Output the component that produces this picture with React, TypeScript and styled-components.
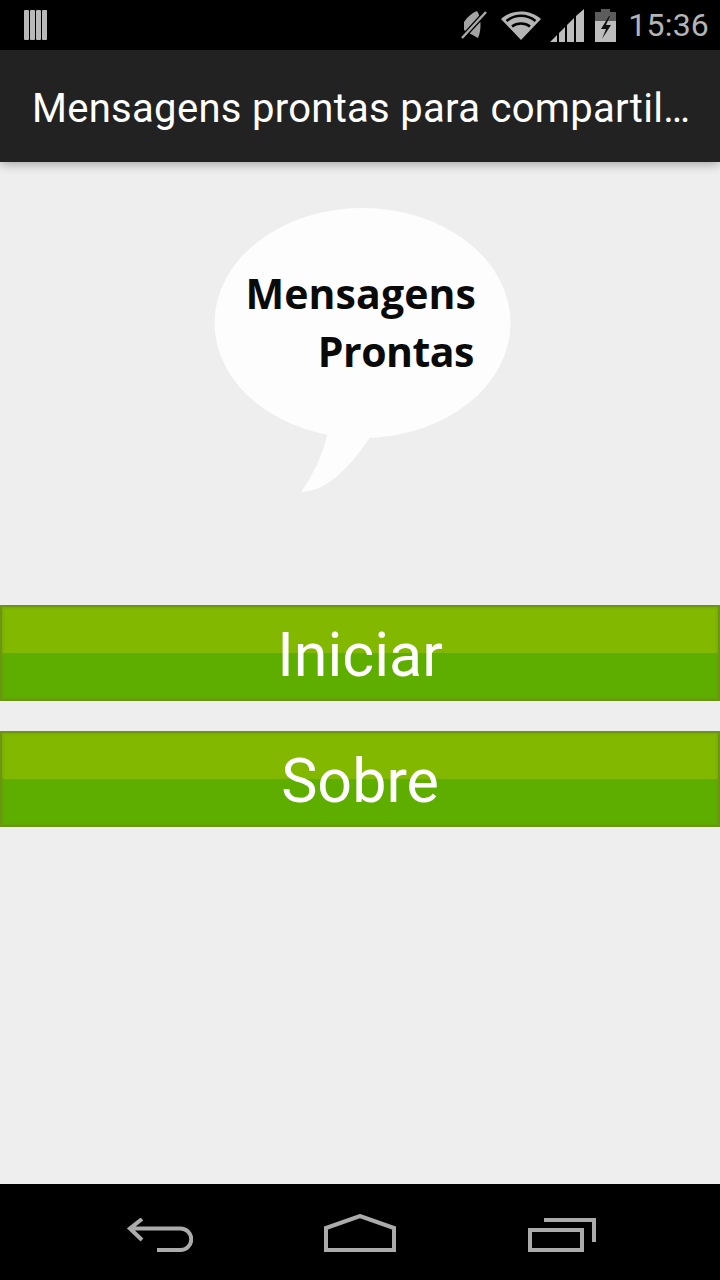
import React from "react";
import styled, { createGlobalStyle } from "styled-components";

const Global = createGlobalStyle`
  html, body { margin: 0; padding: 0; background: #eeeeee; }
  * { box-sizing: border-box; }
`;

const Screen = styled.div`
  width: 720px;
  height: 1280px;
  display: flex;
  flex-direction: column;
  overflow: hidden;
  background: #eeeeee;
  font-family: Roboto, sans-serif;
`;

const StatusBar = styled.header`
  height: 50px;
  flex: none;
  background: #000;
  display: flex;
  align-items: center;
  justify-content: space-between;
  padding: 0 11px 0 24px;
`;

const StatusGroup = styled.div`
  display: flex;
  align-items: center;
`;

const StatusTime = styled.span`
  font-size: 32px;
  line-height: 50px;
  color: #b4b4b4;
  margin-left: 12px;
  letter-spacing: 0.2px;
`;

const ActionBar = styled.div`
  height: 112px;
  flex: none;
  background: #222222;
  display: flex;
  align-items: center;
  padding: 5px 20px 0 32px;
  position: relative;
  z-index: 1;
  box-shadow: 0 2px 10px rgba(0, 0, 0, 0.32);
`;

const Title = styled.h1`
  margin: 0;
  font-size: 40px;
  font-weight: 400;
  letter-spacing: 0.3px;
  color: #fff;
  white-space: nowrap;
`;

const Main = styled.main`
  flex: 1;
  display: flex;
  flex-direction: column;
  align-items: center;
  padding-top: 46px;
`;

const Logo = styled.div`
  position: relative;
  width: 297px;
  height: 286px;
  margin-left: 5px;
  margin-bottom: 111px;
`;

const BubbleArt = styled.svg`
  position: absolute;
  inset: 0;
`;

const LogoText = styled.div`
  position: absolute;
  top: 56px;
  right: 35px;
  text-align: right;
  font-family: "Open Sans", sans-serif;
  font-weight: 700;
  font-size: 41px;
  letter-spacing: 0.1px;
  line-height: 58px;
  color: #0a0a0a;
`;

const LogoLine = styled.div<{ $inset?: number; $tight?: boolean }>`
  padding-right: ${(p) => p.$inset ?? 0}px;
  letter-spacing: ${(p) => (p.$tight ? "-0.5px" : "inherit")};
`;

const MenuButton = styled.button`
  width: 720px;
  height: 96px;
  flex: none;
  padding: 5px 0 0;
  margin: 0 0 30px;
  border: 2px solid #6c9512;
  box-shadow: inset 0 0 2px 1px rgba(110, 150, 20, 0.5);
  background: linear-gradient(#82b800 0 50%, #5eae00 50% 100%);
  color: #fff;
  font-family: Roboto, sans-serif;
  font-size: 61px;
  line-height: 87px;
  font-weight: 400;
  text-align: center;
`;

const NavBar = styled.nav`
  height: 96px;
  flex: none;
  background: #000;
  display: flex;
  align-items: flex-end;
  gap: 131px;
  padding: 0 0 28px 127px;

  svg {
    display: block;
  }
`;

const Icon = { fill: "none", stroke: "#ababab", strokeWidth: 4 };

export default function App() {
  return (
    <Screen>
      <Global />
      <StatusBar>
        <StatusGroup>
          <svg width="24" height="30" viewBox="0 0 24 30">
            <rect x="0" y="0" width="5" height="30" rx="1" fill="#b9b9b9" />
            <rect x="6" y="0" width="5" height="30" rx="1" fill="#b9b9b9" />
            <rect x="12" y="0" width="5" height="30" rx="1" fill="#b9b9b9" />
            <rect x="18" y="0" width="5" height="30" rx="1" fill="#b9b9b9" />
          </svg>
        </StatusGroup>
        <StatusGroup>
          <svg width="28" height="30" viewBox="0 0 28 30">
            <path d="M3 12C6 7 11 3 16 1C20 6 21 20 17 28C12 25 6 22 3 20Z" fill="#a4a4a4" />
            <path d="M1 28 25 2" stroke="#000" strokeWidth="5" />
            <path d="M1 28 25 2" stroke="#a8a8a8" strokeWidth="2.500" />
          </svg>
          <svg width="40" height="30" viewBox="0 0 40 30" style={{ marginLeft: 12 }}>
            <path d="M0 9C11-1 29-1 40 9L20 30Z" fill="#b4b4b4" />
            <path d="M5.500 11C14 4 26 4 34.500 11M11 16.500C16 12.500 24 12.500 29 16.500" stroke="#000" strokeWidth="2.500" fill="none" />
          </svg>
          <svg width="36" height="33" viewBox="0 0 36 33" style={{ marginLeft: 9 }}>
            <path d="M0 33 7 26V33ZM9 24 15 18V33H9ZM17 16 24 9V33H17ZM26 7 34 0V33H26Z" fill="#bdbdbd" />
          </svg>
          <svg width="21" height="33" viewBox="0 0 21 33" style={{ marginLeft: 9 }}>
            <path d="M6 0h9v3h6v9H0V3h6z" fill="#5c5c5c" />
            <path d="M0 12h21v21H0z" fill="#bdbdbd" />
            <path d="M14 7 6 20h5l-4 10 9-14h-5l4-9z" fill="#111" />
          </svg>
          <StatusTime>15:36</StatusTime>
        </StatusGroup>
      </StatusBar>
      <ActionBar>
        <Title>Mensagens prontas para compartil…</Title>
      </ActionBar>
      <Main>
        <Logo>
          <BubbleArt width="297" height="286" viewBox="0 0 297 286">
            <ellipse cx="148.500" cy="115" rx="148" ry="115" fill="#fdfdfd" />
            <path d="M114 224Q106 258 87 284Q120 284 157 228Z" fill="#fdfdfd" />
          </BubbleArt>
          <LogoText>
            <LogoLine>Mensagens</LogoLine>
            <LogoLine $inset={2} $tight>
              Prontas
            </LogoLine>
          </LogoText>
        </Logo>
        <MenuButton>Iniciar</MenuButton>
        <MenuButton>Sobre</MenuButton>
      </Main>
      <NavBar>
        <svg width="66" height="34" viewBox="0 0 66 34">
          <path d="M15 1 3 10.500 15 22M3 10.500H53.500A10.750 10.750 0 0 1 53.500 32H30" {...Icon} />
        </svg>
        <svg width="72" height="38" viewBox="0 0 72 38">
          <path d="M2 36V14L36 2 70 14V36Z" {...Icon} />
        </svg>
        <svg width="69" height="34" viewBox="0 0 69 34">
          <path d="M3 12H55V32H3Z" {...Icon} />
          <path d="M17 2H67V24" {...Icon} />
        </svg>
      </NavBar>
    </Screen>
  );
}
